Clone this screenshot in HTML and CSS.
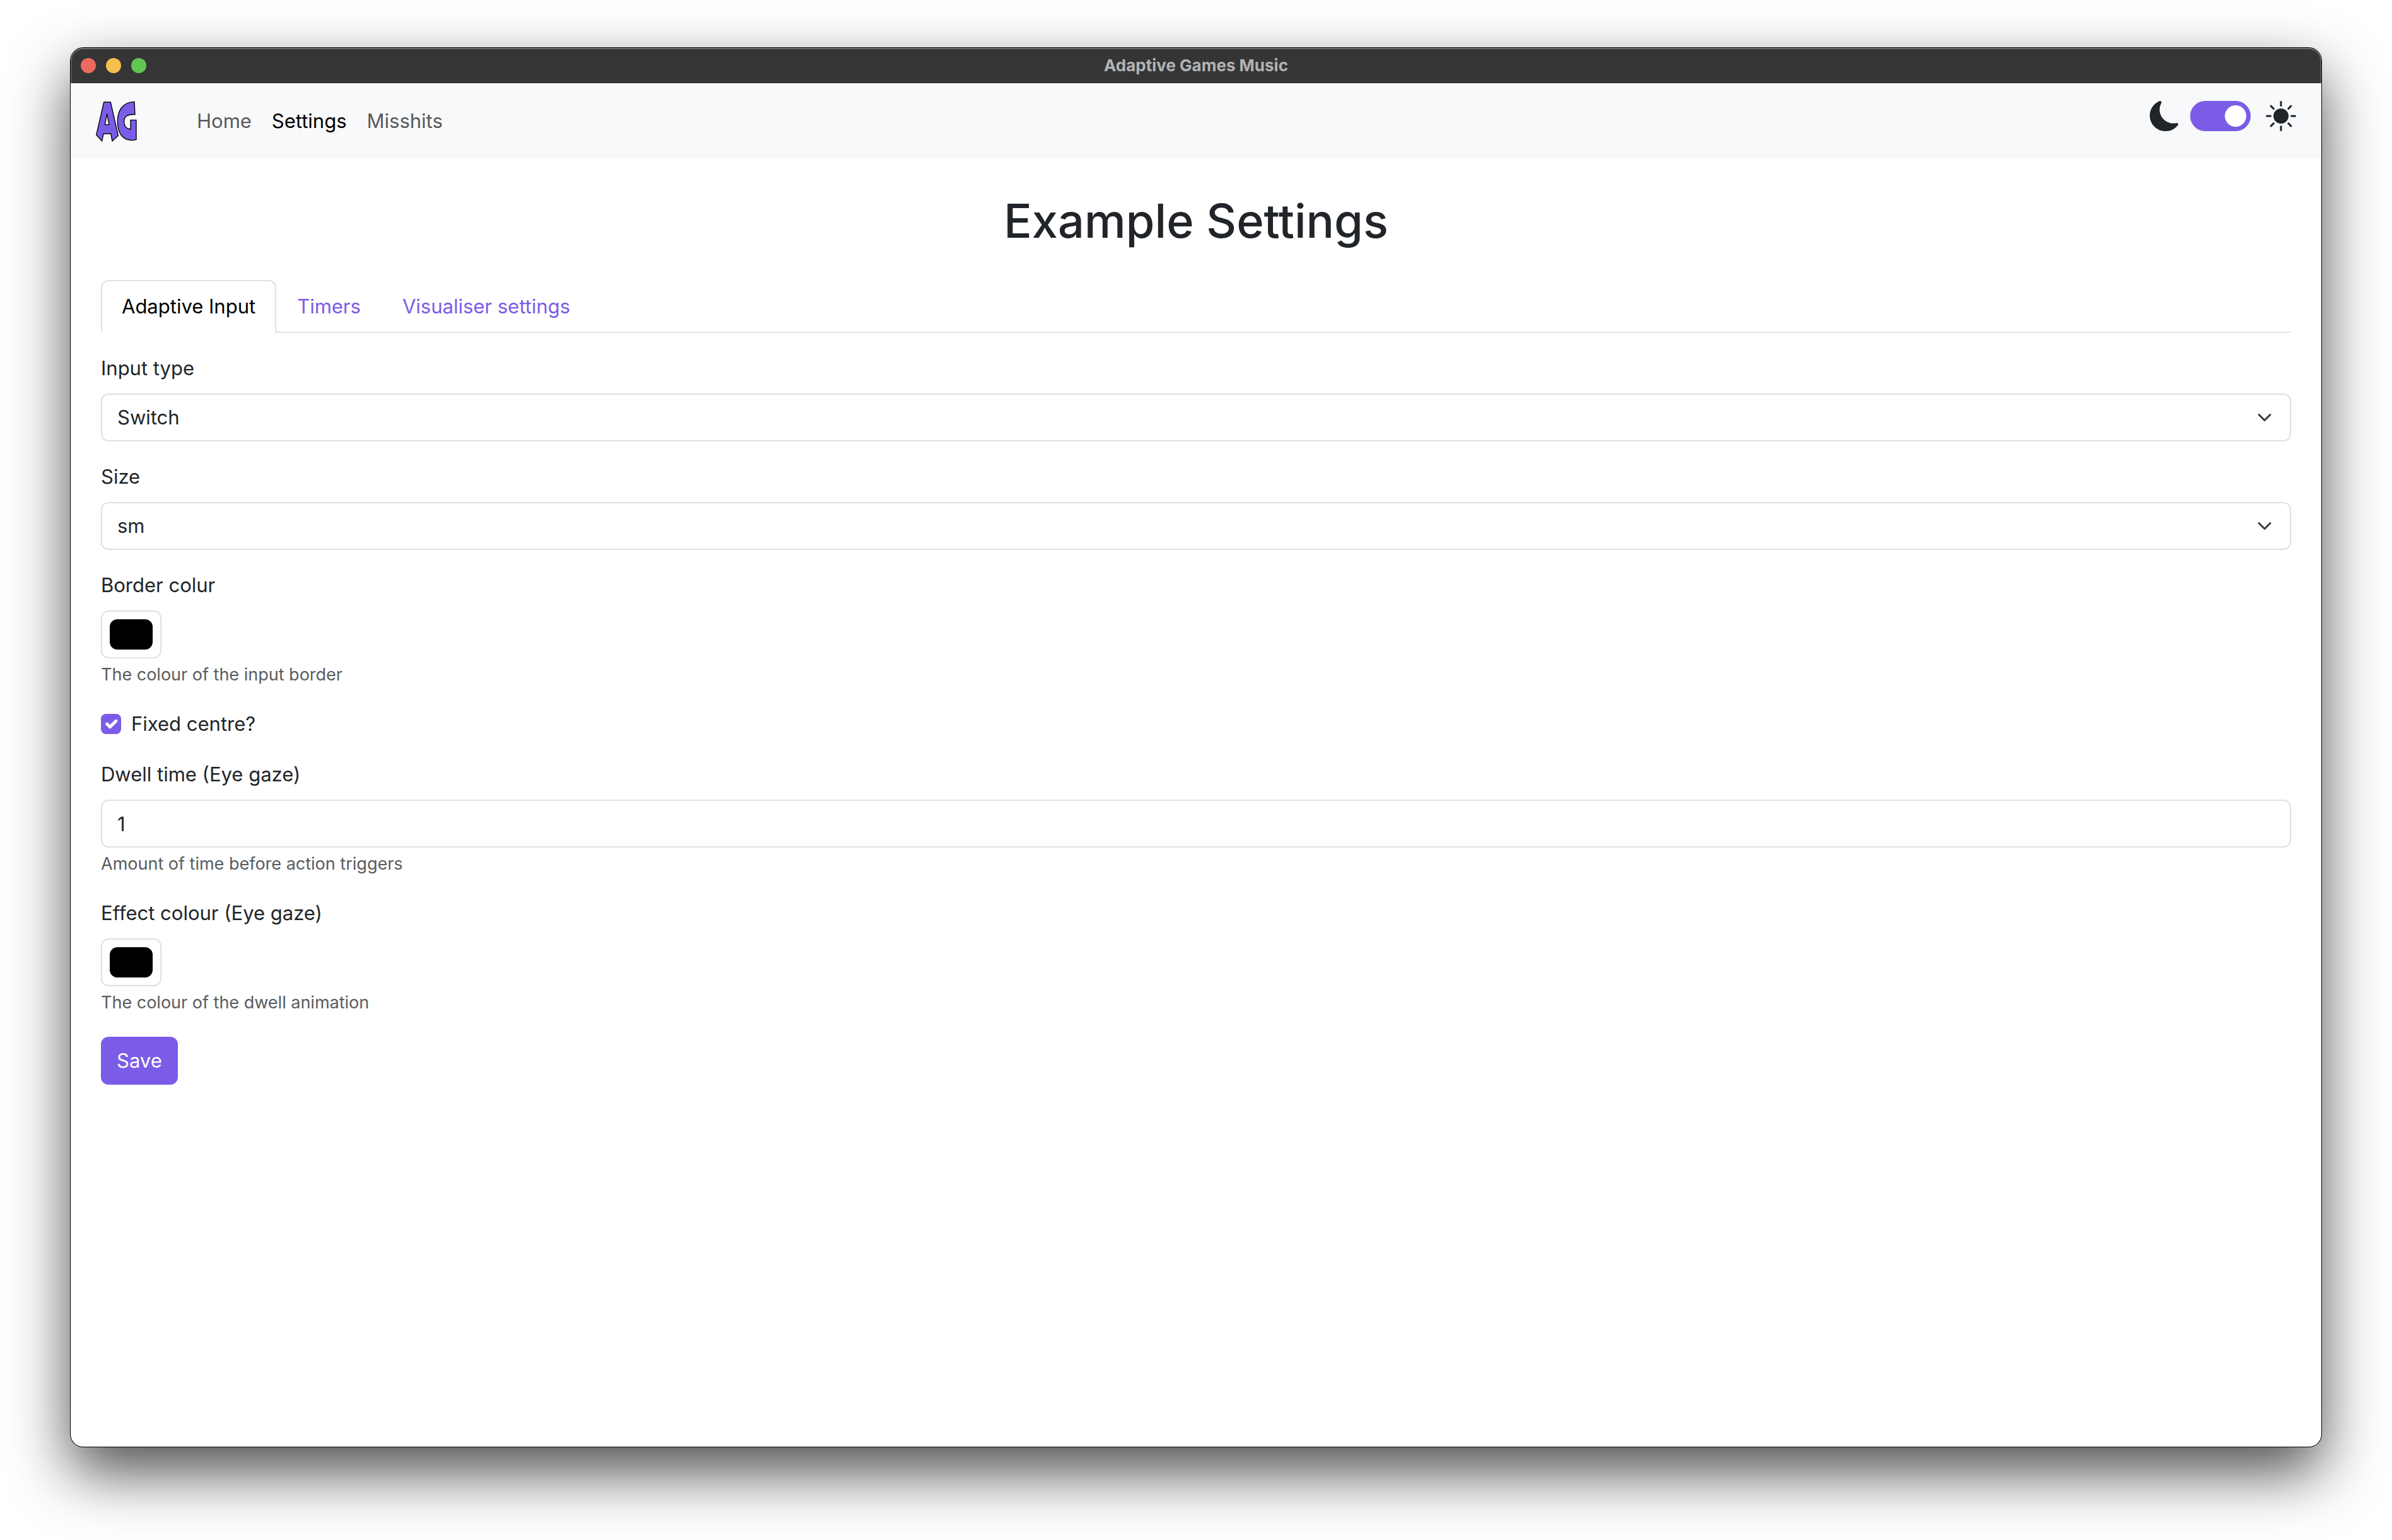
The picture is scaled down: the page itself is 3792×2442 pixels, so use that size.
FILE: index.html
```html
<!DOCTYPE html>
<html lang="en">
<head>
  <meta charset="utf-8">
  <meta name="viewport" content="width=device-width, initial-scale=1">
  <title>Adaptive Games Music</title>
  <link rel="stylesheet" href="styles.css">
</head>
<body>
  <div class="window">
    <header class="titlebar">
      <div class="lights">
        <span class="light light-close"></span>
        <span class="light light-minimise"></span>
        <span class="light light-zoom"></span>
      </div>
      <span class="titlebar-text">Adaptive Games Music</span>
    </header>

    <nav class="navbar">
      <a class="brand" href="#" aria-label="Adaptive Games">
        <svg class="logo" viewBox="35 30 198 195" aria-hidden="true">
          <path d="M73 36H105L141 195L113 221L106 186H71L64 221L37 192ZM88 92L78 143H98Z"/>
          <path d="M218 34C164 35 138 75 138 128C138 180 160 217 207 217Q218 217 227 214V121H200V165C180 163 169 148 169 128C169 104 187 92 221 95Z"/>
        </svg>
      </a>
      <div class="nav-links">
        <a class="nav-link" href="#">Home</a>
        <a class="nav-link active" href="#" aria-current="page">Settings</a>
        <a class="nav-link" href="#">Misshits</a>
      </div>
      <div class="theme">
        <svg class="theme-icon" viewBox="0 0 16 16" aria-hidden="true">
          <path d="M6 .278a.768.768 0 0 1 .08.858 7.208 7.208 0 0 0-.878 3.46c0 4.021 3.278 7.277 7.318 7.277.527 0 1.04-.055 1.533-.16a.787.787 0 0 1 .81.316.733.733 0 0 1-.031.893A8.349 8.349 0 0 1 8.344 16C3.734 16 0 12.286 0 7.71 0 4.266 2.114 1.312 5.124.06A.752.752 0 0 1 6 .278z"/>
        </svg>
        <input class="switch" type="checkbox" role="switch" aria-label="Light theme" checked>
        <svg class="theme-icon theme-sun" viewBox="0 0 16 16" aria-hidden="true">
          <path d="M8 12a4 4 0 1 0 0-8 4 4 0 0 0 0 8zM8 0a.5.5 0 0 1 .5.5v2a.5.5 0 0 1-1 0v-2A.5.5 0 0 1 8 0zm0 13a.5.5 0 0 1 .5.5v2a.5.5 0 0 1-1 0v-2A.5.5 0 0 1 8 13zm8-5a.5.5 0 0 1-.5.5h-2a.5.5 0 0 1 0-1h2a.5.5 0 0 1 .5.5zM3 8a.5.5 0 0 1-.5.5h-2a.5.5 0 0 1 0-1h2A.5.5 0 0 1 3 8zm10.657-5.657a.5.5 0 0 1 0 .707l-1.414 1.415a.5.5 0 1 1-.707-.708l1.414-1.414a.5.5 0 0 1 .707 0zm-9.193 9.193a.5.5 0 0 1 0 .707L3.05 13.657a.5.5 0 0 1-.707-.707l1.414-1.414a.5.5 0 0 1 .707 0zm9.193 2.121a.5.5 0 0 1-.707 0l-1.414-1.414a.5.5 0 0 1 .707-.707l1.414 1.414a.5.5 0 0 1 0 .707zM4.464 4.465a.5.5 0 0 1-.707 0L2.343 3.05a.5.5 0 1 1 .707-.707l1.414 1.414a.5.5 0 0 1 0 .708z"/>
        </svg>
      </div>
    </nav>

    <main class="content">
      <h1 class="heading">Example Settings</h1>

      <div class="tabs" role="tablist">
        <button class="tab active" type="button" role="tab" aria-selected="true">Adaptive Input</button>
        <button class="tab" type="button" role="tab" aria-selected="false">Timers</button>
        <button class="tab" type="button" role="tab" aria-selected="false">Visualiser settings</button>
      </div>

      <form class="form">
        <div class="field">
          <label class="label" for="input-type">Input type</label>
          <div class="overlay">
            <select class="control" id="input-type">
              <option>Switch</option>
              <option>Eye gaze</option>
            </select>
            <svg class="chevron" viewBox="0 0 16 16" aria-hidden="true"><path d="m2 5 6 6 6-6"/></svg>
          </div>
        </div>

        <div class="field">
          <label class="label" for="size">Size</label>
          <div class="overlay">
            <select class="control" id="size">
              <option>sm</option>
              <option>md</option>
              <option>lg</option>
            </select>
            <svg class="chevron" viewBox="0 0 16 16" aria-hidden="true"><path d="m2 5 6 6 6-6"/></svg>
          </div>
        </div>

        <div class="field">
          <label class="label" for="border-colour">Border colur</label>
          <input class="control colour" id="border-colour" type="color" value="#000000" aria-describedby="border-colour-help">
          <div class="help" id="border-colour-help">The colour of the input border</div>
        </div>

        <div class="check">
          <div class="overlay">
            <input class="checkbox" id="fixed-centre" type="checkbox" checked>
            <svg class="tick" viewBox="0 0 20 20" aria-hidden="true"><path d="m6 10 3 3 6-6"/></svg>
          </div>
          <label for="fixed-centre">Fixed centre?</label>
        </div>

        <div class="field">
          <label class="label" for="dwell-time">Dwell time (Eye gaze)</label>
          <input class="control" id="dwell-time" type="number" value="1" aria-describedby="dwell-time-help">
          <div class="help" id="dwell-time-help">Amount of time before action triggers</div>
        </div>

        <div class="field">
          <label class="label" for="effect-colour">Effect colour (Eye gaze)</label>
          <input class="control colour" id="effect-colour" type="color" value="#000000" aria-describedby="effect-colour-help">
          <div class="help" id="effect-colour-help">The colour of the dwell animation</div>
        </div>

        <button class="save" type="submit">Save</button>
      </form>
    </main>
  </div>
</body>
</html>
```

FILE: styles.css
```css
:root {
  --purple: #7b5ce7;
  --ink: #212529;
  --line: #dee2e6;
}

* {
  box-sizing: border-box;
}

body {
  display: flex;
  min-height: 100vh;
  margin: 0;
  padding: 76px 112px 148px;
  background: #fff;
  color: var(--ink);
  font: 400 31px/48px Inter, "Liberation Sans", sans-serif;
}

button,
input,
select {
  margin: 0;
  color: inherit;
  font: inherit;
}

a {
  color: inherit;
  text-decoration: none;
}

/* Desktop window */

.window {
  flex: 1;
  min-width: 0;
  overflow: hidden;
  border-radius: 20px;
  background: #fff;
  box-shadow: 0 0 0 1px #000, 0 40px 96px rgba(0, 0, 0, 0.7);
}

.titlebar {
  display: grid;
  grid-template-columns: 1fr auto 1fr;
  align-items: center;
  height: 56px;
  padding: 0 16px;
  border-radius: 20px 20px 0 0;
  background: #353535;
  box-shadow: inset 0 2px #6f736f, inset 2px 0 #555, inset -2px 0 #555;
}

.lights {
  display: flex;
  gap: 16px;
}

.light {
  width: 24px;
  height: 24px;
  border-radius: 50%;
}

.light-close {
  background: #ed6a5e;
}

.light-minimise {
  background: #f4bf4f;
}

.light-zoom {
  background: #61c554;
}

.titlebar-text {
  color: #b3b3b3;
  font-size: 26px;
  font-weight: 700;
}

/* Navigation */

.navbar {
  display: flex;
  align-items: center;
  height: 120px;
  padding: 0 40px;
  background: #f8f9fb;
}

.brand,
.theme {
  display: flex;
}

.logo {
  width: 66px;
  height: 65px;
  fill: var(--purple);
  fill-rule: evenodd;
  stroke: #000;
  stroke-width: 4;
}

.nav-links {
  display: flex;
  gap: 32px;
  margin-left: 94px;
}

.nav-link {
  color: #595a5b;
}

.nav-link.active {
  color: #000;
}

.theme {
  align-items: center;
  gap: 16px;
  margin-left: auto;
  padding-bottom: 16px;
}

.theme-icon {
  width: 48px;
  height: 48px;
  fill: var(--ink);
}

.theme-sun {
  margin-left: 8px;
}

.switch {
  width: 96px;
  height: 48px;
  padding: 7px;
  appearance: none;
  border-radius: 24px;
  background: var(--purple);
}

.switch::before {
  display: block;
  width: 34px;
  height: 34px;
  border-radius: 50%;
  background: #fff;
  content: "";
}

.switch:checked::before {
  margin-left: auto;
}

/* Page */

.content {
  padding: 48px;
}

.heading {
  margin: 0 0 44px;
  font-size: 74px;
  font-weight: 500;
  line-height: 100px;
  text-align: center;
}

.tabs {
  display: flex;
  box-shadow: inset 0 -2px var(--line);
}

.tab {
  padding: 16px 31px;
  border: 2px solid transparent;
  border-radius: 12px 12px 0 0;
  background: none;
  color: var(--purple);
}

.tab.active {
  border-color: var(--line) var(--line) #fff;
  background: #fff;
  color: #000;
}

/* Form */

.form {
  padding-top: 32px;
}

.field,
.check {
  margin-bottom: 32px;
}

.label {
  display: block;
  margin-bottom: 16px;
}

.overlay {
  display: grid;
  align-items: center;
}

.overlay > * {
  grid-area: 1 / 1;
}

.control {
  display: block;
  width: 100%;
  height: 76px;
  padding: 12px 24px;
  appearance: none;
  border: 2px solid var(--line);
  border-radius: 12px;
  background: #fff;
}

.chevron {
  justify-self: end;
  width: 24px;
  height: 24px;
  margin-right: 30px;
  fill: none;
  stroke: #343a40;
  stroke-linecap: round;
  stroke-linejoin: round;
  stroke-width: 2;
  pointer-events: none;
}

.colour {
  width: 96px;
  padding: 12px;
}

.colour::-webkit-color-swatch-wrapper {
  padding: 0;
}

.colour::-webkit-color-swatch {
  border: 0;
  border-radius: 12px;
}

.help {
  margin-top: 8px;
  padding-bottom: 4px;
  color: #595c5f;
  font-size: 27px;
  line-height: 36px;
}

.check {
  display: flex;
  align-items: center;
  gap: 16px;
}

.checkbox {
  width: 32px;
  height: 32px;
  appearance: none;
  border-radius: 8px;
  background: var(--purple);
}

.tick {
  width: 32px;
  height: 32px;
  fill: none;
  stroke: #fff;
  stroke-linecap: round;
  stroke-linejoin: round;
  stroke-width: 3;
  pointer-events: none;
}

.save {
  height: 76px;
  padding: 12px 25px;
  border: 0;
  border-radius: 12px;
  background: var(--purple);
  color: #fff;
}
```
